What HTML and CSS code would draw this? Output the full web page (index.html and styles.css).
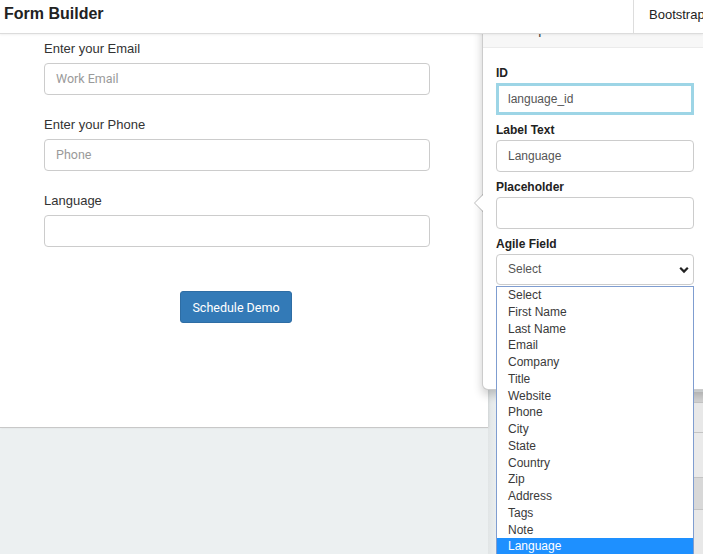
FILE: index.html
```html
<!DOCTYPE html>
<html>
<head>
<meta charset="utf-8">
<link rel="stylesheet" href="styles.css">
</head>
<body>
<header class="topbar">
  <h1 class="brand">Form Builder</h1>
  <div class="tab">Bootstrap</div>
</header>
<main class="workspace">
  <section class="canvas">
    <form class="demo-form">
      <div class="group">
        <label class="lbl">Enter your Email</label>
        <div class="field placeholder">Work Email</div>
      </div>
      <div class="group">
        <label class="lbl">Enter your Phone</label>
        <div class="field placeholder">Phone</div>
      </div>
      <div class="group">
        <label class="lbl">Language</label>
        <div class="field"></div>
      </div>
      <div class="actions">
        <button type="button" class="btn-primary">Schedule Demo</button>
      </div>
    </form>
  </section>
  <aside class="side">
    <div class="side-list">
      <div class="side-row r1"></div>
      <div class="side-row r2"></div>
      <div class="side-row r3"></div>
      <div class="side-row r4"></div>
      <div class="side-row r5"></div>
    </div>
  </aside>
</main>

<div class="popover">
  <div class="arrow"></div>
  <div class="pop-title">Text Input</div>
  <div class="pop-content">
    <div class="pgroup">
      <label class="plbl">ID</label>
      <div class="pinput focus">language_id</div>
    </div>
    <div class="pgroup">
      <label class="plbl">Label Text</label>
      <div class="pinput">Language</div>
    </div>
    <div class="pgroup">
      <label class="plbl">Placeholder</label>
      <div class="pinput"></div>
    </div>
    <div class="pgroup">
      <label class="plbl">Agile Field</label>
      <div class="pinput pselect">
        <span>Select</span>
        <svg class="chev" width="10" height="8" viewBox="0 0 10 8"><path d="M1.2 1.8 L5 5.6 L8.8 1.8" fill="none" stroke="#222" stroke-width="2.2"/></svg>
      </div>
    </div>
  </div>
</div>

<ul class="dropdown">
  <li>Select</li>
  <li>First Name</li>
  <li>Last Name</li>
  <li>Email</li>
  <li>Company</li>
  <li>Title</li>
  <li>Website</li>
  <li>Phone</li>
  <li>City</li>
  <li>State</li>
  <li>Country</li>
  <li>Zip</li>
  <li>Address</li>
  <li>Tags</li>
  <li>Note</li>
  <li class="active">Language</li>
</ul>
</body>
</html>
```

FILE: styles.css
```css
* { box-sizing: border-box; }
html, body { margin: 0; padding: 0; }
body {
  width: 703px;
  height: 554px;
  overflow: hidden;
  background: #ecf0f1;
  font-family: "Liberation Sans", Arial, sans-serif;
  color: #333;
  position: relative;
}

.topbar {
  position: relative;
  z-index: 20;
  height: 34px;
  background: #fff;
  border-bottom: 1px solid #dcdcdc;
  box-shadow: 0 1px 2px rgba(0,0,0,0.06);
  display: flex;
  align-items: flex-start;
}
.brand {
  margin: 0;
  padding: 5px 0 0 4px;
  font-size: 16px;
  line-height: 18px;
  font-weight: bold;
  color: #222;
  flex: 1;
}
.tab {
  width: 70px;
  height: 33px;
  border-left: 1px solid #ddd;
  padding: 7px 0 0 15px;
  font-size: 13px;
  line-height: 16px;
  color: #222;
  white-space: nowrap;
  overflow: hidden;
}

.workspace {
  display: flex;
  align-items: flex-start;
}
.canvas {
  width: 488px;
  height: 394px;
  background: #fff;
  border-bottom: 1px solid #c8c8c8;
  box-shadow: 1px 0 2px rgba(0,0,0,0.08);
  position: relative;
  z-index: 1;
}
.demo-form {
  width: 386px;
  margin-left: 44px;
  padding-top: 6px;
}
.group { margin-bottom: 21px; }
.lbl {
  display: block;
  font-size: 13px;
  line-height: 18px;
  margin-bottom: 5px;
  color: #333;
}
.field {
  height: 32px;
  border: 1px solid #ccc;
  border-radius: 4px;
  padding: 0 11px;
  font-family: Roboto, "Liberation Sans", sans-serif;
  font-size: 12.5px;
  line-height: 30px;
  color: #9a9a9a;
}
.actions {
  display: flex;
  justify-content: center;
  padding-top: 23px;
  padding-right: 2px;
}
.btn-primary {
  height: 32px;
  padding: 0 11px;
  border: 1px solid #2e6da4;
  border-radius: 3px;
  background: #337ab7;
  color: #fff;
  font-family: Roboto, "Liberation Sans", sans-serif;
  font-size: 12.5px;
}

.side {
  flex: 1;
  height: 520px;
  display: flex;
  justify-content: flex-end;
  padding-top: 358px;
  background: linear-gradient(to right, #e1e5e6 0px, #ecf0f1 10px);
}
.side-list {
  width: 9px;
  display: flex;
  flex-direction: column;
}
.side-row { border-bottom: 1px solid #c4c4c4; }
.r1 { height: 11px; background: #d2d2d2; }
.r2 { height: 30px; background: #e8e8e8; }
.r3 { height: 45px; background: #eaeaea; }
.r4 { height: 32px; background: #d8d8d8; }
.r5 { height: 44px; background: #e8e8e8; border-bottom: none; }

.popover {
  position: absolute;
  z-index: 10;
  left: 482px;
  top: 11px;
  width: 232px;
  height: 379px;
  background: #fff;
  border: 1px solid rgba(0,0,0,0.2);
  border-radius: 6px;
  box-shadow: 0 5px 10px rgba(0,0,0,0.2);
}
.arrow {
  position: absolute;
  left: -9px;
  top: 182px;
  width: 0;
  height: 0;
  border-style: solid;
  border-width: 9px 9px 9px 0;
  border-color: transparent rgba(0,0,0,0.25) transparent transparent;
}
.arrow::after {
  content: "";
  position: absolute;
  left: 1px;
  top: -8px;
  border-style: solid;
  border-width: 8px 8px 8px 0;
  border-color: transparent #fff transparent transparent;
}
.pop-title {
  padding: 9px 14px;
  font-size: 14px;
  line-height: 17px;
  color: #444;
  background: #f7f7f7;
  border-bottom: 1px solid #ebebeb;
  border-radius: 5px 5px 0 0;
}
.pop-content {
  padding: 17px 13px 0 13px;
}
.pgroup { padding-top: 7px; }
.pgroup:first-child { padding-top: 0; }
.plbl {
  display: block;
  font-size: 12px;
  font-weight: bold;
  line-height: 17px;
  margin-bottom: 1px;
  color: #222;
}
.pinput {
  width: 198px;
  height: 32px;
  border: 1px solid #ccc;
  border-radius: 4px;
  padding: 0 11px;
  font-size: 12px;
  line-height: 30px;
  color: #555;
}
.pinput.focus {
  border: 3px solid #9dd5e6;
  border-radius: 0;
  padding: 0 9px;
  line-height: 26px;
}
.pselect {
  display: flex;
  align-items: center;
  justify-content: space-between;
  height: 31px;
  padding-right: 4px;
  line-height: 29px;
}
.chev { margin-top: 1px; }

.dropdown {
  position: absolute;
  z-index: 15;
  left: 496px;
  top: 286px;
  width: 198px;
  height: 268px;
  margin: 0;
  padding: 0;
  list-style: none;
  background: #fff;
  border: 1px solid #7f9dd0;
  border-bottom: none;
}
.dropdown li {
  height: 16.75px;
  padding-left: 11px;
  font-size: 12px;
  line-height: 16.75px;
  color: #3a3a3a;
}
.dropdown li.active {
  background: #1e90ff;
  color: #fff;
}
```
